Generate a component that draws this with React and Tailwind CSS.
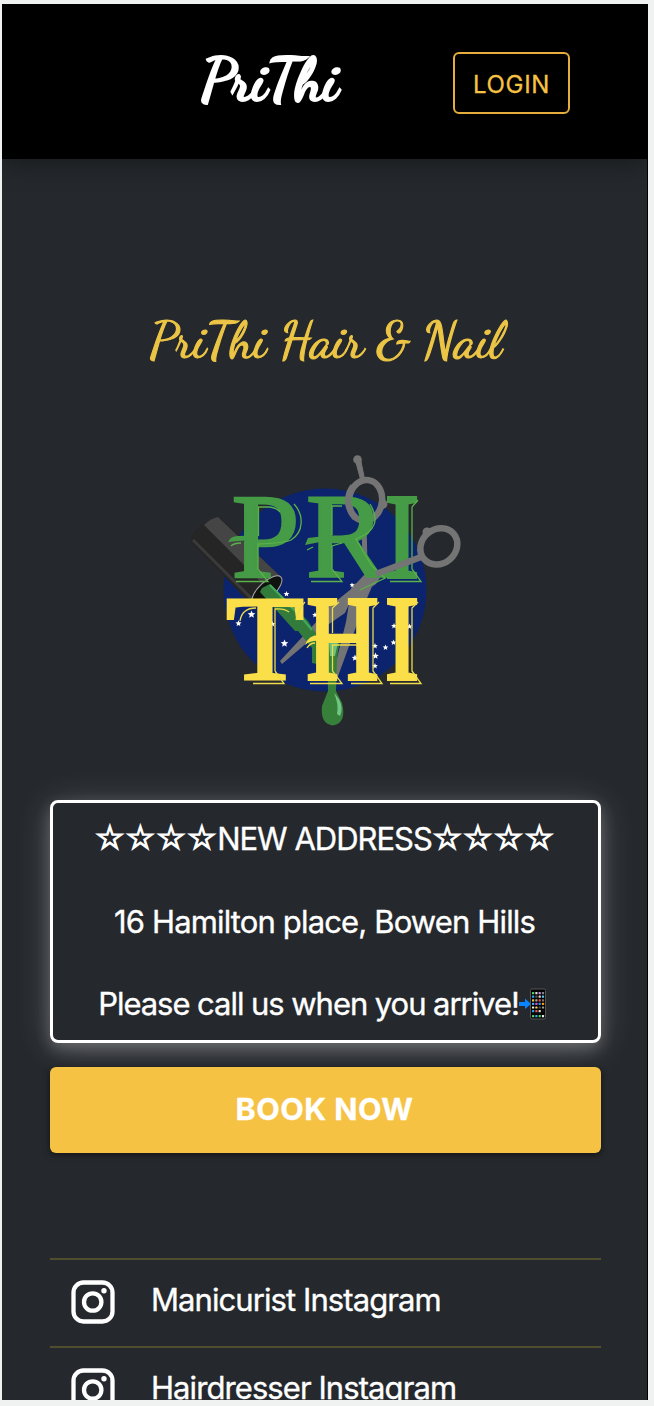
import React from "react";

const STARS = [
  [238.5, 623.5, 3.2], [251.5, 614.5, 4], [286.5, 594, 3], [272.5, 624, 3], [284.5, 643.5, 4], [315, 615, 3],
  [352, 585, 2.5], [394, 626, 3], [409.5, 626.5, 3], [393.5, 642.5, 3], [385.5, 647.5, 3], [375, 646, 3],
  [375.5, 656, 3.5], [355, 658, 3.5], [375, 666, 3],
];

function starPoints(cx, cy, r) {
  return Array.from({ length: 10 }, (_, i) => {
    const radius = i % 2 ? r * 0.45 : r;
    const a = (Math.PI * i) / 5 - Math.PI / 2;
    return `${cx + radius * Math.cos(a)},${cy + radius * Math.sin(a)}`;
  }).join(" ");
}

const LETTERS = [
  ["P", 231.5, 576.5, 68, 2.5], ["R", 306, 576.5, 80, 2.5], ["I", 385, 576.5, 34, 4],
  ["T", 226, 678.5, 78, 3], ["H", 306.5, 678.5, 72, 4], ["I", 385, 678.5, 34, 4],
];

function Logo() {
  return (
    <svg viewBox="180 440 290 290" className="h-[290px] w-[290px]">
      <circle cx="325" cy="590" r="101.5" fill="#0c246d" />
      <path d="M191 542Q190 535 199 527L213 518Q217 515 222 520L281 577Q280 592 256 605L249 602Z" fill="#252525" />
      <path d="M204 525Q211 518 218 517L281 577L271 581L262 583Z" fill="#454545" />
      <path d="M193 540L254 601" stroke="#3a3a3a" strokeWidth="3" />
      <ellipse cx="267" cy="590" rx="19" ry="8" transform="rotate(-43 267 590)" fill="#101210" stroke="#aaa" strokeWidth="1" />
      <g stroke="#747474" fill="none">
        <path d="M355 459L360.5 479H364.5L360.5 459Z" fill="#747474" strokeWidth="1" />
        <circle cx="357.5" cy="459.5" r="4.3" fill="#747474" stroke="none" />
        <ellipse cx="365.5" cy="500.5" rx="16.5" ry="20.5" transform="rotate(8 366 501)" strokeWidth="6.5" />
        <circle cx="383" cy="504" r="4.5" fill="#747474" stroke="none" />
        <circle cx="427" cy="532" r="4.5" fill="#747474" stroke="none" />
        <path d="M364 523L365 564L372 578" strokeWidth="5" />
        <path d="M385 570L376 584L367 590L350 602L345 613L329 624L282 664L280 661L318 620L330 606L350 590L365 574Z" fill="#747474" stroke="none" />
        <path d="M352 584L374 582L364 605L337 679L334 670L346 622Z" fill="#747474" stroke="none" />
      </g>
      <path d="M262 588L270 584L299 612L308 621L323 645L317 664L312 663L312 648L298 631H295L260 592Z" fill="#327b3b" />
      <path d="M270 585L302 618L312 630" fill="none" stroke="#43a95a" strokeWidth="2" />
      <path d="M327 640H340L337 658L336 691L342 703Q347 723 333 725.5Q320 724 322 706L328 691Z" fill="#378039" />
      <path d="M329 640L338 642L335 656H330Z" fill="#6cc17e" />
      <path d="M334 693Q345 704 340 716L337 714Q339 704 334 693Z" fill="#70c584" />
      <g fill="white">
        {STARS.map(([x, y, r]) => <polygon key={`${x}-${y}`} points={starPoints(x, y, r)} />)}
      </g>
      <g fontFamily="Liberation Serif" fontSize="121">
        {LETTERS.map(([c, x, y, w, sw], i) => (
          <text key={i} x={x} y={y} textLength={w} lengthAdjust="spacingAndGlyphs" strokeWidth={sw}
            stroke={i < 3 ? "#459b46" : "#fbdf49"} fill={i < 3 ? "#459b46" : "#fbdf49"}>{c}</text>
        ))}
      </g>
      <g fill="none" stroke="#5bb14a" strokeWidth="1.3">
        <path d="M294 504C304 515 304 532 291 540Q284 543 258 544V569L268 581.500H236" />
        <path d="M258.5 536V507H270Q277 508 280 512" />
        <path d="M370 504C379 519 377 531 356 539L372 566L385 578L360 590" />
        <path d="M332 535V506H342M332 569L342 581.500H311M332 569V546L342 543" />
        <path d="M418 500L412 507V569L421 581.500H390" />
        <path d="M231 546Q234 543 241 543M307 550L313 547" />
      </g>
      <g fill="none" stroke="#eddb4b" strokeWidth="1.3">
        <path d="M240 621Q242 608 256 608M275 671V609Q284 608 289 612M296 620Q299 608 305 602M275 671L284 683.500H253" />
        <path d="M339 602L332.5 608V633M332.5 671V645H357M332.5 671L342 683.500H310" />
        <path d="M379 602L373 608V671L382 683.500H351" />
        <path d="M418 602L412 608V671L421 683.500H390" />
        <path d="M307 648Q310 643 315 643" />
      </g>
      <g fill="#459b46">
        <path d="M228 542Q231 535 240 536L257 535V540L238 541Z" />
        <path d="M305 545L308 538L325 536V541Z" />
      </g>
      <path d="M305 645Q309 634 320 635V641Q311 640 305 645Z" fill="#fbdf49" />
      <g fill="none" stroke="#747474">
        <path d="M421 557L376 574" strokeWidth="6.5" />
        <ellipse cx="438.5" cy="546.5" rx="19.5" ry="17" transform="rotate(-40 438.5 546)" strokeWidth="6.5" />
        <path d="M355 518C346 508 346 495 353 486" strokeWidth="6" />
      </g>
    </svg>
  );
}

const APP_COLORS = ["#4cd964", "#ddd", "#c58be0", "#888", "#29a9f5", "#555", "#f0d9c0", "#59bfff", "#e5c84a", "#aaa", "#ef5350", "#777",
  "#35b5e5", "#d34be0", "#2196f3", "#ff9800", "#eee", "#ffd54f", "#555", "#999", "#29a9f5", "#ef5350", "#ddd", "#111", "#4cd964", "#39a9ef", "#4cd964", "#eee"];

function PhoneEmoji() {
  return (
    <svg viewBox="0 0 28 32" className="h-8 w-7 shrink-0" stroke="none">
      <path d="M0 14H6V10.5L12 16L6 21V18H0Z" fill="#0a84ff" />
      <rect x="11.5" y="1" width="15" height="30" rx="1.5" fill="#050505" stroke="#555" />
      {APP_COLORS.map((c, i) => (
        <rect key={i} x={13 + (i % 4) * 3.3} y={4 + Math.floor(i / 4) * 3.6 + (i > 23 ? 1.5 : 0)} width="2.2" height="2.2" rx="0.5" fill={c} />
      ))}
    </svg>
  );
}

function InstagramIcon() {
  return (
    <svg viewBox="0 0 44 44" className="-mt-0.5 h-11 w-11 shrink-0" fill="none" stroke="white" strokeWidth="4.3">
      <rect x="2.5" y="2.5" width="39" height="39" rx="10" />
      <circle cx="21.7" cy="22" r="8.7" />
      <circle cx="33" cy="10.7" r="2.7" fill="white" stroke="none" />
    </svg>
  );
}

function Stars() {
  return (
    <span className="flex">
      {[0, 1, 2, 3].map((i) => (
        <span key={i} className="-mt-0.5 flex w-[30.7px] justify-center font-['DejaVu_Sans'] text-[32.5px] tracking-normal [-webkit-text-stroke:1.5px_white]">☆</span>
      ))}
    </span>
  );
}

function SocialRow({ label }) {
  return (
    <a className="flex h-[88px] shrink-0 items-center gap-[36px] border-t-2 border-[#4f4e2d] pl-[21px] text-[31px] tracking-[-0.92px] text-white [-webkit-text-stroke:0.35px_white]">
      <InstagramIcon />
      <span className="-mt-1.5 whitespace-nowrap">{label}</span>
    </a>
  );
}

export default function App() {
  return (
    <div className="h-[1406px] w-[654px] overflow-hidden bg-[#f0f1f1] pt-1 pl-0.5 font-[Inter,sans-serif]">
      <div className="flex h-[1396px] w-[646px] flex-col overflow-hidden border-r border-black bg-[#25282c]">
        <header className="z-10 flex h-[155px] shrink-0 items-center bg-black pl-[198px] shadow-[0_4px_24px_rgba(0,0,0,0.35)]">
          <h1 className="-mt-[3px] w-[253px] font-['Dancing_Script',cursive] text-[60px] leading-none font-bold tracking-[-0.9px] text-white [-webkit-text-stroke:2px_white]">PriThi</h1>
          <button className="mt-[3px] h-[62px] w-[117px] rounded-md border-2 border-[#e5ad3b] pt-[3px] text-[24px] tracking-[0.7px] text-[#f6c244] [-webkit-text-stroke:0.3px_#f6c244]">LOGIN</button>
        </header>
        <main className="flex flex-col pr-[46px] pl-12">
          <h2 className="mt-[142px] h-[80px] text-center font-['Dancing_Script',cursive] text-[52px] leading-[80px] tracking-[-0.1px] whitespace-nowrap text-[#ecc546] [-webkit-text-stroke:1.1px_#ecc546]">PriThi Hair &amp; Nail</h2>
          <div className="mt-[59px] flex pl-[130px]"><Logo /></div>
          <section className="mt-[70px] flex h-[243px] shrink-0 flex-col items-center justify-between rounded-lg border-[3.5px] border-white pt-3 pr-0.5 pb-3 text-[31px] leading-[48px] tracking-[-0.85px] whitespace-nowrap text-white [-webkit-text-stroke:0.35px_white] shadow-[0_4px_36px_rgba(255,255,255,0.2),0_6px_16px_rgba(255,255,255,0.22)]">
            <p className="flex h-12 items-center tracking-[-1px]"><Stars />NEW ADDRESS<Stars /></p>
            <p>16 Hamilton place, Bowen Hills</p>
            <p className="flex items-center pr-1 tracking-[-1.05px]">Please call us when you arrive!<PhoneEmoji /></p>
          </section>
          <button className="mt-6 h-[86px] shrink-0 rounded-md bg-[#f6c244] pr-0.5 pb-0.5 text-[30.5px] font-bold tracking-[0.5px] text-white [-webkit-text-stroke:0.3px_white] shadow-[0_2px_6px_rgba(0,0,0,0.5)]">BOOK NOW</button>
          <nav className="mt-[105px] flex flex-col">
            <SocialRow label="Manicurist Instagram" />
            <SocialRow label="Hairdresser Instagram" />
          </nav>
        </main>
      </div>
    </div>
  );
}
